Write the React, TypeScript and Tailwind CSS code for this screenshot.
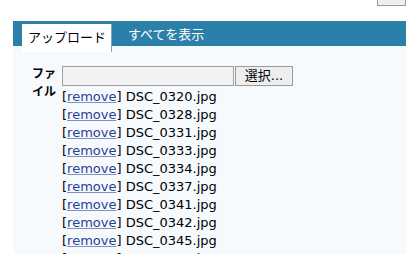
export default function App() {
  const files = [
    "DSC_0320.jpg",
    "DSC_0328.jpg",
    "DSC_0331.jpg",
    "DSC_0333.jpg",
    "DSC_0334.jpg",
    "DSC_0337.jpg",
    "DSC_0341.jpg",
    "DSC_0342.jpg",
    "DSC_0345.jpg",
    "DSC_0350.jpg",
  ];

  return (
    <div
      className="relative h-[254px] w-[406px] overflow-hidden bg-white text-[13px] text-black"
      style={{ fontFamily: '"DejaVu Sans", "Noto Sans CJK JP", sans-serif' }}
    >
      {/* top-right button edge */}
      <div className="absolute right-0 top-[-14px] h-[20px] w-[29px] border border-[#9a9a9a] bg-[#eeeeee]" />

      <div className="ml-[13px] pt-[21px]">
        {/* tab bar */}
        <div className="flex h-[25px] items-end bg-[#2a80a8] pl-[9px]">
          <div className="relative z-10 flex h-[28px] w-[90px] translate-y-[6px] items-start border-r border-[#7aa9c2] bg-white pl-[6px] pt-[4px]">
            アップロード
          </div>
          <div className="flex h-[25px] items-center pl-[16px] pt-[2px] text-white">すべてを表示</div>
        </div>

        {/* content */}
        <div className="flex bg-[#f6fafd] pt-[19px]">
          <div className="w-[49px] pl-[19px] text-[12px] font-bold leading-[18px]">ファイル</div>
          <div className="flex flex-col">
            <div className="flex h-[21px] pt-[1px]">
              <input
                type="text"
                className="h-[20px] w-[172px] border border-[#a0a0a0] bg-[#f2f2f2]"
              />
              <button className="ml-[1px] h-[20px] w-[58px] border border-[#9a9a9a] bg-[#eeeeee] text-[13px] leading-[18px]">
                選択...
              </button>
            </div>
            <ul className="mt-[2px]">
              {files.map((f) => (
                <li key={f} className="h-[18px] leading-[18px] whitespace-nowrap">
                  [<a className="text-[#2b3f99] underline decoration-[#8090c0]">remove</a>] {f}
                </li>
              ))}
            </ul>
          </div>
        </div>
      </div>
    </div>
  );
}
